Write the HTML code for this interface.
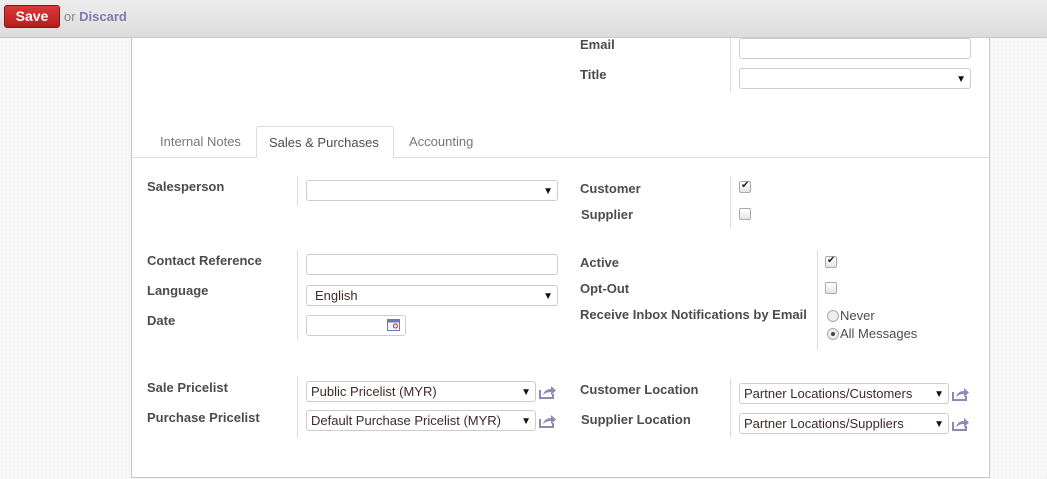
<!DOCTYPE html>
<html><head><style>
*{margin:0;padding:0;box-sizing:border-box}
body{width:1047px;height:479px;overflow:hidden;position:relative;font-family:"Liberation Sans",Arial,sans-serif;font-size:13px;color:#4c4c4c;
background-color:#f7f7f7;background-image:radial-gradient(#ececec 0.6px,transparent 0.8px);background-size:4px 4px}
.top{position:absolute;left:0;top:0;width:1047px;height:38px;background:linear-gradient(#ededed,#dcdcdc);border-bottom:1px solid #c8c8c8}
.save{position:absolute;left:4px;top:5px;width:56px;height:23px;background:linear-gradient(#d83a3a,#b51e1e);border:1px solid #8e1414;border-radius:3px;color:#fff;font-weight:bold;font-size:14px;text-align:center;line-height:21px}
.or{position:absolute;left:64px;top:9px;color:#888;font-size:13px}
.or b{color:#7c7bad}
.sheet{position:absolute;left:131px;top:38px;width:859px;height:440px;background:#fff;border:1px solid #c8c8c8;border-top:none}
.a{position:absolute}
.l{position:absolute;font-weight:bold;font-size:13px;line-height:16px;color:#4c4c4c}
.v{position:absolute;width:1px;background:#ddd}
.in{position:absolute;border:1px solid #ccc;border-radius:3px;background:#fff;height:21px;font-size:13px;line-height:19px;padding-left:4px;color:#3e2a2a}
.sel:after{content:"▼";position:absolute;right:4px;top:1px;font-size:10px;color:#111}
.cb{position:absolute;width:12px;height:12px;border:1px solid #aaa;border-radius:2px;background:linear-gradient(#fff,#e4e4e4)}
.ck:after{content:"✔";position:absolute;left:1px;top:-2px;font-size:10px;color:#222}
.ext{position:absolute;width:17px;height:14px}
.tab{position:absolute;top:126px;height:32px;line-height:31px;font-size:13px;color:#777;padding:0 12px}
</style></head><body>
<div class="top"><div class="save">Save</div><div class="or">or <b>Discard</b></div></div>
<div class="sheet"></div>

<div class="l" style="left:580px;top:37px">Email</div>
<div class="l" style="left:580px;top:67px">Title</div>
<div class="v" style="left:730px;top:38px;height:55px"></div>
<div class="in" style="left:739px;top:38px;width:232px"></div>
<div class="in sel" style="left:739px;top:68px;width:232px"></div>

<div class="a" style="left:131px;top:157px;width:858px;height:1px;background:#ddd"></div>
<div class="tab" style="left:148px">Internal Notes</div>
<div class="tab" style="left:256px;width:138px;background:#fff;border:1px solid #ddd;border-bottom:1px solid #fff;border-radius:3px 3px 0 0;color:#4c4c4c;padding-left:12px">Sales &amp; Purchases</div>
<div class="tab" style="left:397px">Accounting</div>

<div class="l" style="left:147px;top:179px">Salesperson</div>
<div class="v" style="left:297px;top:176px;height:30px"></div>
<div class="in sel" style="left:306px;top:180px;width:252px"></div>

<div class="l" style="left:580px;top:181px">Customer</div>
<div class="l" style="left:581px;top:207px">Supplier</div>
<div class="v" style="left:730px;top:176px;height:53px"></div>
<div class="cb ck" style="left:739px;top:181px"></div>
<div class="cb" style="left:739px;top:208px"></div>

<div class="l" style="left:147px;top:253px">Contact Reference</div>
<div class="l" style="left:147px;top:283px">Language</div>
<div class="l" style="left:147px;top:313px">Date</div>
<div class="v" style="left:297px;top:250px;height:90px"></div>
<div class="in" style="left:306px;top:254px;width:252px"></div>
<div class="in sel" style="left:306px;top:285px;width:252px;padding-left:8px">English</div>
<div class="in" style="left:306px;top:315px;width:100px;height:21px">
<svg style="position:absolute;right:5px;top:3px" width="13" height="12"><rect x="0.5" y="0.5" width="12" height="11" fill="#f4f4ff" stroke="#6a7ab8"/><rect x="0.5" y="0.5" width="12" height="3" fill="#6a7ab8"/><circle cx="8.5" cy="7" r="2" fill="none" stroke="#b03030"/></svg></div>

<div class="l" style="left:580px;top:255px">Active</div>
<div class="l" style="left:580px;top:281px">Opt-Out</div>
<div class="l" style="left:580px;top:307px">Receive Inbox Notifications by Email</div>
<div class="v" style="left:817px;top:250px;height:100px"></div>
<div class="cb ck" style="left:825px;top:256px"></div>
<div class="cb" style="left:825px;top:282px"></div>
<div class="a" style="left:827px;top:310px;width:12px;height:12px;border:1px solid #aaa;border-radius:50%;background:#eee"></div>
<div class="a" style="left:840px;top:308px;line-height:16px">Never</div>
<div class="a" style="left:827px;top:328px;width:12px;height:12px;border:1px solid #aaa;border-radius:50%;background:#eee"><div style="position:absolute;left:3px;top:3px;width:4px;height:4px;border-radius:50%;background:#444"></div></div>
<div class="a" style="left:840px;top:326px;line-height:16px">All Messages</div>

<div class="l" style="left:147px;top:380px">Sale Pricelist</div>
<div class="l" style="left:147px;top:410px">Purchase Pricelist</div>
<div class="v" style="left:297px;top:376px;height:62px"></div>
<div class="in sel" style="left:306px;top:381px;width:230px">Public Pricelist (MYR)</div>
<div class="in sel" style="left:306px;top:410px;width:230px">Default Purchase Pricelist (MYR)</div>

<div class="l" style="left:580px;top:382px">Customer Location</div>
<div class="l" style="left:581px;top:412px">Supplier Location</div>
<div class="v" style="left:730px;top:378px;height:60px"></div>
<div class="in sel" style="left:739px;top:383px;width:210px">Partner Locations/Customers</div>
<div class="in sel" style="left:739px;top:413px;width:210px">Partner Locations/Suppliers</div>

<svg class="ext" style="left:539px;top:385px" viewBox="0 0 17 14"><path d="M1 5v8h13v-4" fill="none" stroke="#8a89b8" stroke-width="2"/><path d="M4 10c1-4 4-6 8-6V1l5 4.5-5 4.5V7c-3 0-6 1-8 3z" fill="#8a89b8"/></svg>
<svg class="ext" style="left:539px;top:414px" viewBox="0 0 17 14"><path d="M1 5v8h13v-4" fill="none" stroke="#8a89b8" stroke-width="2"/><path d="M4 10c1-4 4-6 8-6V1l5 4.5-5 4.5V7c-3 0-6 1-8 3z" fill="#8a89b8"/></svg>
<svg class="ext" style="left:952px;top:387px" viewBox="0 0 17 14"><path d="M1 5v8h13v-4" fill="none" stroke="#8a89b8" stroke-width="2"/><path d="M4 10c1-4 4-6 8-6V1l5 4.5-5 4.5V7c-3 0-6 1-8 3z" fill="#8a89b8"/></svg>
<svg class="ext" style="left:952px;top:417px" viewBox="0 0 17 14"><path d="M1 5v8h13v-4" fill="none" stroke="#8a89b8" stroke-width="2"/><path d="M4 10c1-4 4-6 8-6V1l5 4.5-5 4.5V7c-3 0-6 1-8 3z" fill="#8a89b8"/></svg>
</body></html>
